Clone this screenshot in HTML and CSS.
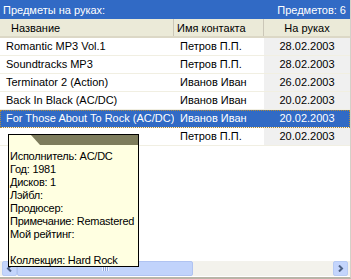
FILE: index.html
```html
<!DOCTYPE html>
<html lang="ru">
<head>
    <meta charset="UTF-8">
    <title>Предметы на руках</title>
    <link rel="stylesheet" href="styles.css">
</head>
<body>
<div class="panel">
    <div class="titlebar">
        <span>Предметы на руках:</span>
        <span>Предметов: 6</span>
    </div>
    <div class="list">
        <div class="row header">
            <div class="cell">Название</div>
            <div class="cell">Имя контакта</div>
            <div class="cell date">На руках</div>
        </div>
        <div class="row">
            <div class="cell">Romantic MP3 Vol.1</div>
            <div class="cell">Петров П.П.</div>
            <div class="cell date">28.02.2003</div>
        </div>
        <div class="row">
            <div class="cell">Soundtracks MP3</div>
            <div class="cell">Петров П.П.</div>
            <div class="cell date">28.02.2003</div>
        </div>
        <div class="row">
            <div class="cell">Terminator 2 (Action)</div>
            <div class="cell">Иванов Иван</div>
            <div class="cell date">26.02.2003</div>
        </div>
        <div class="row">
            <div class="cell">Back In Black (AC/DC)</div>
            <div class="cell">Иванов Иван</div>
            <div class="cell date">20.02.2003</div>
        </div>
        <div class="row selected">
            <div class="cell">For Those About To Rock (AC/DC)</div>
            <div class="cell">Иванов Иван</div>
            <div class="cell date">20.02.2003</div>
        </div>
        <div class="row">
            <div class="cell"></div>
            <div class="cell">Петров П.П.</div>
            <div class="cell date">20.02.2003</div>
        </div>
    </div>
    <div class="hscroll">
        <div class="sbtn">
            <svg width="7" height="7" viewBox="0 0 7 7"><path d="M5 0.5 L2 3.5 L5 6.5" fill="none" stroke="#4d6185" stroke-width="2"/></svg>
        </div>
        <div class="thumb"><span class="grip"></span></div>
        <div class="track"></div>
        <div class="sbtn">
            <svg width="7" height="7" viewBox="0 0 7 7"><path d="M2 0.5 L5 3.5 L2 6.5" fill="none" stroke="#4d6185" stroke-width="2"/></svg>
        </div>
    </div>

    <div class="tip">
        <div class="tip-band"></div>
        <div class="tip-body">
            <div>Исполнитель: AC/DC</div>
            <div>Год: 1981</div>
            <div>Дисков: 1</div>
            <div>Лэйбл:</div>
            <div>Продюсер:</div>
            <div>Примечание: Remastered</div>
            <div>Мой рейтинг:</div>
            <div>&nbsp;</div>
            <div>Коллекция: Hard Rock</div>
        </div>
    </div>
</div>
</body>
</html>
```

FILE: styles.css
```css
body { margin: 0; font-family: 'Liberation Sans', Arial, sans-serif; font-size: 11px; color: #000; }
.panel {
    position: relative; width: 351px; height: 279px; background: #fff;
    display: flex; flex-direction: column; box-sizing: border-box;
    border-right: 1px solid #d4d0c8; border-bottom: 2px solid #b8b5a8;
}
.titlebar {
    height: 19px; background: #316ac5; color: #fff;
    display: flex; justify-content: space-between; align-items: center;
    padding: 0 4px 0 3px; flex-shrink: 0;
}
.list { flex: 1; }
.row {
    display: grid; grid-template-columns: 174px 90px 1fr;
    height: 18px; border-bottom: 1px solid #f1efe2; box-sizing: border-box;
}
.cell { padding-left: 6px; line-height: 17px; white-space: nowrap; overflow: hidden; }
.date { text-align: center; padding-left: 0; background: #f0f0f0; }
.header {
    height: 19px; background: #ebead8; border-bottom: 2px solid #dcd8c6;
}
.header .cell { padding-left: 11px; line-height: 18px; border-right: 1px solid #cbc7b8; }
.header .cell:nth-child(2) { padding-left: 3px; }
.header .date { background: none; padding-left: 0; border-right: none; }
.selected { background: #316ac5; color: #fff; outline: 1px dotted #b08a3a; outline-offset: -1px; }
.selected .date { background: #316ac5; }

.hscroll {
    height: 15px; display: flex; padding: 0 2px; margin-bottom: 1px;
    background: #f3f2ec; flex-shrink: 0;
}
.sbtn {
    width: 15px; height: 15px; box-sizing: border-box; border: 1px solid #b7cbf4;
    border-radius: 2px; background: #c4d5fc;
    display: flex; align-items: center; justify-content: center;
}
.thumb {
    width: 176px; box-sizing: border-box; border: 1px solid #b0c3f1;
    border-radius: 2px; background: #c1d3fb;
    display: flex; align-items: center; justify-content: center;
}
.grip {
    width: 7px; height: 5px;
    background: repeating-linear-gradient(90deg, #eef3fe 0 1px, #8da6e3 1px 2px);
}
.track { flex: 1; }

.tip {
    position: absolute; left: 8px; top: 134px; width: 131px; height: 133px;
    box-sizing: border-box; border: 1px solid #000; background: #ffffe1;
    white-space: nowrap; overflow: hidden;
}
.tip-band {
    height: 10px; background: #7d7c5c;
    clip-path: polygon(22px 0, 100% 0, 100% 100%, 31px 100%);
}
.tip-body { padding: 5px 0 0 1px; line-height: 13px; letter-spacing: -0.25px; }
```
